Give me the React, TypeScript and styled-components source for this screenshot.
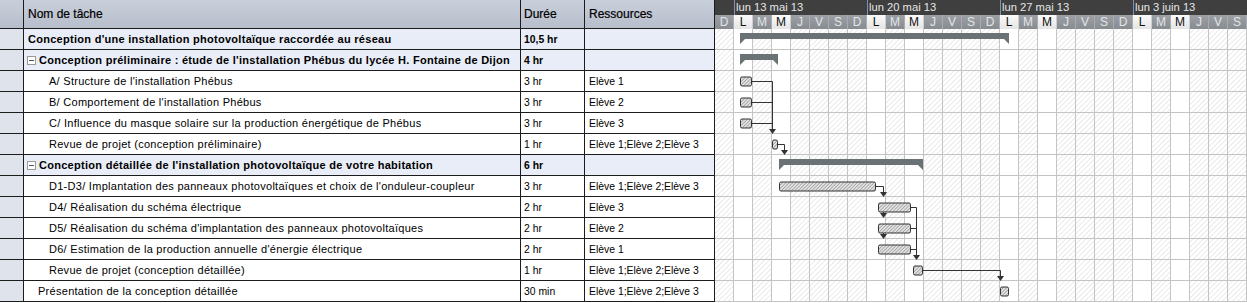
import styled, { createGlobalStyle } from 'styled-components';

const GlobalStyle = createGlobalStyle`
  html, body {
    margin: 0;
    padding: 0;
    background: #fff;
    overflow: hidden;
  }
  body {
    font-family: "Liberation Sans", Arial, sans-serif;
  }
`;

const ROW_H = 21;
const DAY_W = 19;

type Task = {
  name: string;
  dur: string;
  res: string;
  level: 0 | 1 | 2;
  summary?: boolean;
  toggle?: boolean;
};

const tasks: Task[] = [
  { name: "Conception d'une installation photovoltaïque raccordée au réseau", dur: '10,5 hr', res: '', level: 0, summary: true },
  { name: "Conception préliminaire : étude de l'installation Phébus du lycée H. Fontaine de Dijon", dur: '4 hr', res: '', level: 1, summary: true, toggle: true },
  { name: "A/ Structure de l'installation Phébus", dur: '3 hr', res: 'Elève 1', level: 2 },
  { name: "B/ Comportement de l'installation Phébus", dur: '3 hr', res: 'Elève 2', level: 2 },
  { name: 'C/ Influence du masque solaire sur la production énergétique de Phébus', dur: '3 hr', res: 'Elève 3', level: 2 },
  { name: 'Revue de projet (conception préliminaire)', dur: '1 hr', res: 'Elève 1;Elève 2;Elève 3', level: 2 },
  { name: "Conception détaillée de l'installation photovoltaïque de votre habitation", dur: '6 hr', res: '', level: 1, summary: true, toggle: true },
  { name: "D1-D3/ Implantation des panneaux photovoltaïques et choix de l'onduleur-coupleur", dur: '3 hr', res: 'Elève 1;Elève 2;Elève 3', level: 2 },
  { name: 'D4/ Réalisation du schéma électrique', dur: '2 hr', res: 'Elève 3', level: 2 },
  { name: "D5/ Réalisation du schéma d'implantation des panneaux photovoltaïques", dur: '2 hr', res: 'Elève 2', level: 2 },
  { name: "D6/ Estimation de la production annuelle d'énergie électrique", dur: '2 hr', res: 'Elève 1', level: 2 },
  { name: 'Revue de projet (conception détaillée)', dur: '1 hr', res: 'Elève 1;Elève 2;Elève 3', level: 2 },
  { name: 'Présentation de la conception détaillée', dur: '30 min', res: 'Elève 1;Elève 2;Elève 3', level: 1 },
];

const weekLetters = ['L', 'M', 'M', 'J', 'V', 'S', 'D'];
const days = ['D', ...weekLetters, ...weekLetters, ...weekLetters, ...weekLetters.slice(0, 6)];
const isWorkDay = (i: number) => i % 7 === 1 || i % 7 === 3;

const weeks = [
  { label: 'lun 13 mai 13', days: 7 },
  { label: 'lun 20 mai 13', days: 7 },
  { label: 'lun 27 mai 13', days: 7 },
  { label: 'lun 3 juin 13', days: 6 },
];

const Page = styled.div`
  display: flex;
  width: 1247px;
  height: 303px;
  overflow: hidden;
`;

const Table = styled.div`
  width: 715px;
  flex: none;
  display: flex;
  flex-direction: column;
`;

const Row = styled.div<{ $head?: boolean }>`
  display: grid;
  grid-template-columns: 24px 497px 64px 130px;
  height: ${({ $head }) => ($head ? 29 : ROW_H)}px;
`;

const Cell = styled.div<{ $bg?: string; $pad?: number; $bold?: boolean }>`
  box-sizing: border-box;
  display: flex;
  align-items: center;
  gap: 3px;
  padding-left: ${({ $pad }) => $pad ?? 3}px;
  border-right: 1px solid #1c1c1c;
  border-bottom: 1px solid #1c1c1c;
  background: ${({ $bg }) => $bg ?? '#fff'};
  font-size: 11px;
  font-weight: ${({ $bold }) => ($bold ? 700 : 400)};
  color: #000;
  white-space: nowrap;
  overflow: hidden;
`;

const NameCell = styled(Cell)`
  letter-spacing: 0.28px;
`;

const ValueCell = styled(Cell)`
  font-size: 10.4px;
`;

const HeadCell = styled(Cell)`
  background: linear-gradient(to bottom, #c9cfda, #b7becb);
  font-size: 12px;
  color: #000;
  padding-bottom: 1px;
  -webkit-text-stroke: 0.2px #000;
`;

const RowHead = styled(Cell)`
  background: #dfe3ec;
`;

const Toggle = styled.span`
  box-sizing: border-box;
  width: 9px;
  height: 9px;
  border: 1px solid #9a9a9a;
  background: #fff;
  display: inline-flex;
  align-items: center;
  justify-content: center;
  flex: none;
  &::after {
    content: '';
    width: 5px;
    height: 1px;
    background: #555;
  }
`;

const Gantt = styled.div`
  width: 532px;
  flex: none;
  display: flex;
  flex-direction: column;
`;

const WeekBand = styled.div`
  display: flex;
  height: 15px;
  background: #3f3f3f;
`;

const WeekCell = styled.div<{ $w: number; $first?: boolean }>`
  box-sizing: border-box;
  width: ${({ $w }) => $w}px;
  flex: none;
  border-left: ${({ $first }) => ($first ? 'none' : '1px solid #8790aa')};
  padding-left: 1px;
  color: #e6e6e6;
  font-size: 11.2px;
  line-height: 15px;
  white-space: nowrap;
`;

const DayBand = styled.div`
  display: flex;
  height: 14px;
`;

const DayCell = styled.div<{ $work: boolean }>`
  box-sizing: border-box;
  width: ${DAY_W}px;
  flex: none;
  text-align: center;
  font-size: 12px;
  line-height: 14px;
  border-right: 1px solid ${({ $work }) => ($work ? '#cfcfcf' : '#a9adb1')};
  background: ${({ $work }) =>
    $work ? 'linear-gradient(to bottom, #fbfbfb, #e4e4e4)' : 'linear-gradient(to bottom, #9da1a6, #878c91)'};
  color: ${({ $work }) => ($work ? '#111' : '#e2e5e8')};
`;

const Chart = styled.svg`
  display: block;
`;

const namePad = (t: Task) => (t.level === 0 ? 4 : t.level === 1 ? (t.toggle ? 3 : 14) : 25);

const cy = (r: number) => r * ROW_H + 10;
const top = (r: number) => r * ROW_H;

function SummaryBar({ r, x0, x1 }: { r: number; x0: number; x1: number }) {
  const t = top(r) + 4;
  return (
    <path
      d={`M${x0} ${t} H${x1} V${t + 11} L${x1 - 5} ${t + 6} H${x0 + 5} L${x0} ${t + 11} Z`}
      fill="#6a7276"
    />
  );
}

function TaskBar({ r, x0, x1 }: { r: number; x0: number; x1: number }) {
  return (
    <rect
      x={x0 + 0.5}
      y={cy(r) - 4}
      width={x1 - x0 - 1}
      height={9}
      rx={1.5}
      fill="url(#barHatch)"
      stroke="#333"
      strokeWidth={1}
    />
  );
}

function Arrow({ x, tip }: { x: number; tip: number }) {
  return <path d={`M${x - 3.5} ${tip - 5} H${x + 3.5} L${x} ${tip} Z`} fill="#333" />;
}

function GanttBody() {
  const w = days.length * DAY_W;
  const h = tasks.length * ROW_H;
  const line = { stroke: '#333', strokeWidth: 1, fill: 'none' };
  return (
    <Chart width={w} height={h} viewBox={`0 0 ${w} ${h}`}>
      <defs>
        <pattern id="offHatch" width="3.6" height="3.6" patternUnits="userSpaceOnUse" patternTransform="rotate(45)">
          <line x1="0" y1="0" x2="0" y2="3.6" stroke="#d6d6d6" strokeWidth="1" />
        </pattern>
        <pattern id="barHatch" width="2.4" height="2.4" patternUnits="userSpaceOnUse" patternTransform="rotate(45)">
          <rect width="2.4" height="2.4" fill="#e2e2e2" />
          <line x1="0" y1="0" x2="0" y2="2.4" stroke="#6e6e6e" strokeWidth="0.9" />
        </pattern>
      </defs>
      {days.map((_, i) =>
        isWorkDay(i) ? null : <rect key={i} x={i * DAY_W} y={0} width={DAY_W} height={h} fill="url(#offHatch)" />
      )}
      {days.map((_, i) => (
        <line key={`v${i}`} x1={(i + 1) * DAY_W - 0.5} y1={0} x2={(i + 1) * DAY_W - 0.5} y2={h} stroke="#c4c4c4" />
      ))}
      {tasks.map((_, r) => (
        <line key={`h${r}`} x1={0} y1={top(r) + 20.5} x2={w} y2={top(r) + 20.5} stroke="#c4c4c4" />
      ))}

      <SummaryBar r={0} x0={25} x1={294} />
      <SummaryBar r={1} x0={25} x1={63} />
      <SummaryBar r={6} x0={64} x1={208} />

      <TaskBar r={2} x0={25} x1={37} />
      <TaskBar r={3} x0={25} x1={37} />
      <TaskBar r={4} x0={25} x1={37} />
      <TaskBar r={5} x0={57} x1={63} />
      <TaskBar r={7} x0={64} x1={161} />
      <TaskBar r={8} x0={163} x1={196} />
      <TaskBar r={9} x0={163} x1={196} />
      <TaskBar r={10} x0={163} x1={196} />
      <TaskBar r={11} x0={198} x1={208} />
      <TaskBar r={12} x0={285} x1={294} />

      <path
        d={`M37 ${cy(2) + 0.5} H57.5 M37 ${cy(3) + 0.5} H57.5 M37 ${cy(4) + 0.5} H57.5 M57.5 ${cy(2) + 0.5} V${top(5) - 4}`}
        {...line}
      />
      <Arrow x={57.5} tip={top(5)} />

      <path d={`M63 ${cy(5) + 0.5} H69.5 V${top(6) - 4}`} {...line} />
      <Arrow x={69.5} tip={top(6)} />

      <path d={`M161 ${cy(7) + 0.5} H168.5 V${top(8) - 4}`} {...line} />
      <Arrow x={168.5} tip={top(8)} />

      <path d={`M168.5 ${cy(8) + 5} V${top(9) - 4}`} {...line} />
      <Arrow x={168.5} tip={top(9)} />
      <path d={`M168.5 ${cy(9) + 5} V${top(10) - 4}`} {...line} />
      <Arrow x={168.5} tip={top(10)} />

      <path
        d={`M196 ${cy(8) + 0.5} H201.5 M196 ${cy(9) + 0.5} H201.5 M196 ${cy(10) + 0.5} H201.5 M201.5 ${cy(8) + 0.5} V${top(11) - 4}`}
        {...line}
      />
      <Arrow x={201.5} tip={top(11)} />

      <path d={`M208 ${cy(11) + 0.5} H285.5 V${top(12) - 4}`} {...line} />
      <Arrow x={285.5} tip={top(12)} />
    </Chart>
  );
}

export default function App() {
  return (
    <Page>
      <GlobalStyle />
      <Table>
        <Row $head>
          <HeadCell />
          <HeadCell $pad={4}>Nom de tâche</HeadCell>
          <HeadCell>Durée</HeadCell>
          <HeadCell $pad={4}>Ressources</HeadCell>
        </Row>
        {tasks.map((t, i) => {
          const bg = t.summary ? '#e9edf7' : '#fff';
          return (
            <Row key={i}>
              <RowHead />
              <NameCell $bg={bg} $pad={namePad(t)} $bold={t.summary}>
                {t.toggle && <Toggle />}
                {t.name}
              </NameCell>
              <ValueCell $bg={bg} $bold={t.summary}>
                {t.dur}
              </ValueCell>
              <ValueCell $bg={bg} $pad={4}>
                {t.res}
              </ValueCell>
            </Row>
          );
        })}
      </Table>
      <Gantt>
        <WeekBand>
          <WeekCell $w={DAY_W} $first />
          {weeks.map((w) => (
            <WeekCell key={w.label} $w={w.days * DAY_W}>
              {w.label}
            </WeekCell>
          ))}
        </WeekBand>
        <DayBand>
          {days.map((d, i) => (
            <DayCell key={i} $work={isWorkDay(i)}>
              {d}
            </DayCell>
          ))}
        </DayBand>
        <GanttBody />
      </Gantt>
    </Page>
  );
}
